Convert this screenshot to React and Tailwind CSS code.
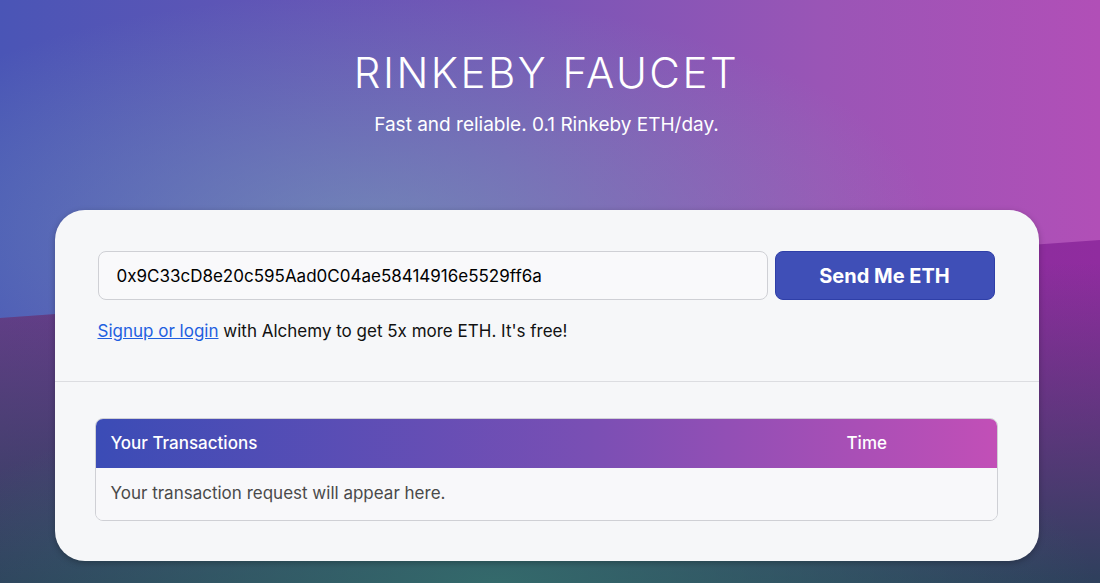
export default function App() {
  const address = "0x9C33cD8e20c595Aad0C04ae58414916e5529ff6a";

  return (
    <div className="relative min-h-[583px] overflow-hidden font-['Inter',sans-serif] bg-[radial-gradient(ellipse_560px_240px_at_34%_40%,rgba(120,170,185,0.55),transparent),linear-gradient(to_right,#4a55b6,#7456b6_45%,#9a55b6_75%,#b14fb7)]">
      {/* lower slanted band behind the card */}
      <div className="absolute inset-0 [clip-path:polygon(0_318px,100%_240px,100%_100%,0_100%)] bg-[radial-gradient(ellipse_600px_200px_at_45%_100%,rgba(52,108,108,0.95),transparent),linear-gradient(to_bottom,rgba(46,64,92,0)_45%,rgba(46,64,92,1)_100%),linear-gradient(to_right,#6a3e8e,#7a3595_50%,#902c9f)]" />

      <div className="relative flex flex-col items-center pr-[7px]">
        <h1 className="mt-[51px] text-[42px] leading-[44px] font-light tracking-[2.5px] text-white">
          RINKEBY FAUCET
        </h1>
        <p className="mt-[18px] text-[19px] leading-[23px] text-white">
          Fast and reliable. 0.1 Rinkeby ETH/day.
        </p>

        <div className="mt-[74px] w-[984px] rounded-[30px] bg-[#f6f7f9] shadow-[0_2px_6px_rgba(0,0,0,0.25)]">
          <div className="pl-[43px] pr-[44px] pt-[41px] pb-[39px]">
            <div className="flex gap-[7px]">
              <input
                readOnly
                value={address}
                className="h-[49px] flex-1 rounded-[8px] border border-[#cfd0d5] bg-[#f9f9fb] px-[18px] text-[17px] text-black outline-none"
              />
              <button className="h-[49px] w-[220px] rounded-[8px] border border-[#2f3fa8] bg-[#3f4fb7] text-[20px] font-bold text-white">
                Send Me ETH
              </button>
            </div>
            <p className="mt-[21px] text-[17px] leading-[21px] text-[#111]">
              <a href="#" className="text-[#1f5fe0] underline">
                Signup or login
              </a>{" "}
              with Alchemy to get 5x more ETH. It's free!
            </p>
          </div>

          <div className="border-t border-[#dcdde1] pl-[40px] pr-[41px] pt-[36px] pb-[40px]">
            <div className="overflow-hidden rounded-[8px] border border-[#cfd0d5]">
              <div className="flex h-[49px] items-center bg-[linear-gradient(to_right,#3b4cb6,#7a4fb4_55%,#c24fb7)] pl-[15px] text-[17px] font-medium text-white">
                <span className="flex-1">Your Transactions</span>
                <span className="w-[150px]">Time</span>
              </div>
              <div className="flex h-[52px] items-center bg-[#f8f8fa] pl-[15px] text-[17px] text-[#4a4a4a]">
                Your transaction request will appear here.
              </div>
            </div>
          </div>
        </div>
      </div>
    </div>
  );
}
